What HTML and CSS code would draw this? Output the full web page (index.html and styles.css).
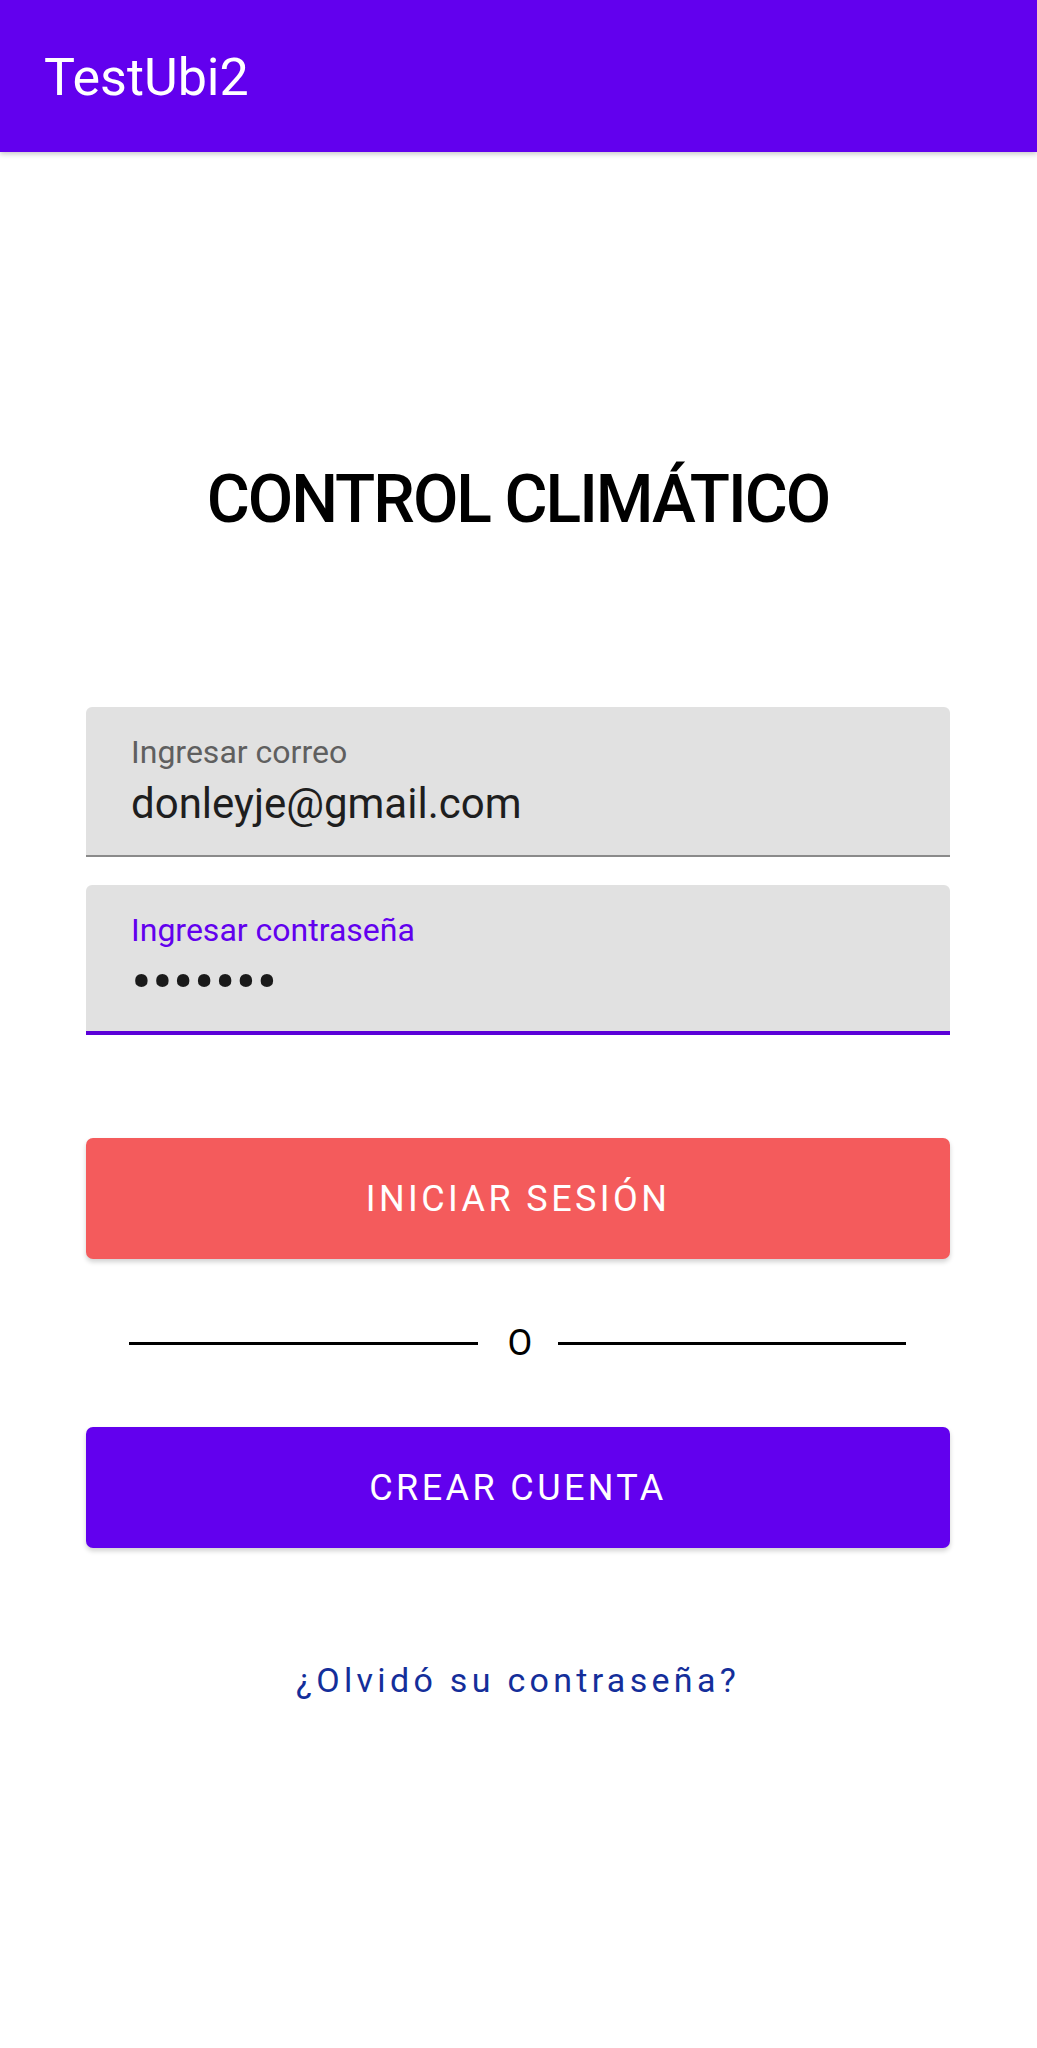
FILE: index.html
```
<!DOCTYPE html>
<html lang="es">
<head>
<meta charset="utf-8">
<title>TestUbi2</title>
<link rel="stylesheet" href="styles.css">
</head>
<body>
<header class="appbar">
  <span class="appbar-title">TestUbi2</span>
</header>
<main class="content">
  <h1 class="title">CONTROL CLIMÁTICO</h1>
  <div class="field">
    <span class="field-label">Ingresar correo</span>
    <span class="field-value">donleyje@gmail.com</span>
  </div>
  <div class="field field-focused">
    <span class="field-label">Ingresar contraseña</span>
    <span class="field-value dots">•••••••</span>
  </div>
  <button class="btn btn-login">INICIAR SESIÓN</button>
  <div class="divider">
    <span class="divider-line"></span>
    <span class="divider-text">O</span>
    <span class="divider-line"></span>
  </div>
  <button class="btn btn-create">CREAR CUENTA</button>
  <a class="forgot" href="#">¿Olvidó su contraseña?</a>
</main>
</body>
</html>
```
FILE: styles.css
```
* { box-sizing: border-box; }
html, body { margin: 0; padding: 0; background: #ffffff; }
body {
  font-family: Roboto, "Noto Sans", sans-serif;
  width: 1037px;
  min-height: 2048px;
}
.appbar {
  height: 152px;
  background: #6200EE;
  display: flex;
  align-items: center;
  padding-left: 44px;
  box-shadow: 0 2px 5px rgba(0,0,0,0.22);
  position: relative;
  z-index: 1;
}
.appbar-title {
  color: #ffffff;
  font-size: 52px;
  line-height: 52px;
  margin-top: 4px;
}
.content {
  display: flex;
  flex-direction: column;
  padding: 0 87px 0 86px;
}
.title {
  margin: 312px 0 0 0;
  text-align: center;
  font-family: Roboto, "Noto Sans", sans-serif;
  font-weight: 500;
  font-size: 66px;
  line-height: 72px;
  letter-spacing: -2px;
  color: #000000;
}
.field {
  margin-top: 171px;
  height: 150px;
  background: #e1e1e1;
  border-radius: 6px 6px 0 0;
  border-bottom: 2px solid #8a8a8a;
  padding: 29px 45px 0 45px;
  display: flex;
  flex-direction: column;
}
.field-focused {
  margin-top: 28px;
  border-bottom: 4px solid #5b00d8;
}
.field-label {
  font-size: 32px;
  line-height: 32px;
  color: #5f5f5f;
}
.field-focused .field-label { color: #6200EE; }
.field-value {
  margin-top: 15px;
  font-size: 42px;
  line-height: 42px;
  color: #1e1e1e;
}
.dots {
  font-size: 62px;
  line-height: 42px;
  letter-spacing: 0px;
  color: #1a1a1a;
}
.btn {
  border: none;
  border-radius: 7px;
  height: 121px;
  font-family: Roboto, "Noto Sans", sans-serif;
  font-size: 36px;
  letter-spacing: 3.4px;
  color: #ffffff;
  box-shadow: 0 3px 5px rgba(0,0,0,0.18);
  padding: 0;
}
.btn-login {
  margin-top: 103px;
  background: #f45b5c;
}
.btn-create {
  margin-top: 0;
  background: #6200EE;
}
.divider {
  height: 168px;
  display: flex;
  align-items: center;
  padding: 0 44px 0 43px;
  gap: 30px;
}
.divider-line {
  flex: 1;
  height: 3px;
  background: #000000;
}
.divider-text {
  font-size: 36px;
  color: #000000;
  width: 20px;
  text-align: center;
}
.forgot {
  margin-top: 112px;
  align-self: center;
  font-size: 34px;
  line-height: 40px;
  letter-spacing: 4.3px;
  color: #142e9a;
  text-decoration: none;
}
```
